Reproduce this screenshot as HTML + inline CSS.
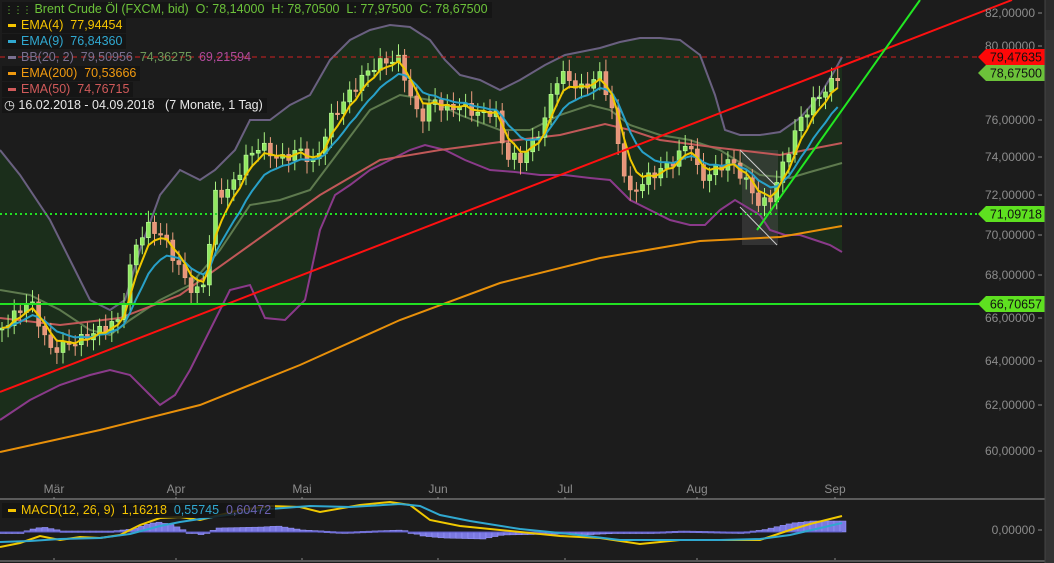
<!DOCTYPE html>
<html><head><meta charset="utf-8"><style>
html,body{margin:0;padding:0;background:#1c1c1c;width:1054px;height:563px;overflow:hidden;font-family:"Liberation Sans",sans-serif}
#c{position:absolute;left:0;top:0}
.lg{position:absolute;left:2px;font-size:12.5px;line-height:15px;background:rgba(20,20,20,.85);padding:0 4px 0 2px;white-space:nowrap}
</style></head><body>
<svg id="c" width="1054" height="563" xmlns="http://www.w3.org/2000/svg"></svg>
<div class="lg" style="top:2px;color:#6cc23a"><span style="font-size:10px;letter-spacing:-1px">&#8942;&#8942;&#8942;</span> Brent Crude Öl (FXCM, bid)&nbsp; O: 78,14000&nbsp; H: 78,70500&nbsp; L: 77,97500&nbsp; C: 78,67500</div>
<div class="lg" style="top:18px;color:#f5c400"><span style="display:inline-block;width:8px;height:3px;background:#f5c400;vertical-align:middle;margin:0 5px 0 4px"></span>EMA(4)&nbsp; 77,94454</div>
<div class="lg" style="top:34px;color:#30a8d0"><span style="display:inline-block;width:8px;height:3px;background:#30a8d0;vertical-align:middle;margin:0 5px 0 4px"></span>EMA(9)&nbsp; 76,84360</div>
<div class="lg" style="top:50px;color:#7a7090;background:none"><span style="display:inline-block;width:8px;height:3px;background:#7a7090;vertical-align:middle;margin:0 5px 0 4px"></span>BB(20, 2)&nbsp; 79,50956&nbsp; <span style="color:#6f9a5a">74,36275</span>&nbsp; <span style="color:#b04a9a">69,21594</span></div>
<div class="lg" style="top:66px;color:#f09a10"><span style="display:inline-block;width:8px;height:3px;background:#f09a10;vertical-align:middle;margin:0 5px 0 4px"></span>EMA(200)&nbsp; 70,53666</div>
<div class="lg" style="top:82px;color:#d05a5a"><span style="display:inline-block;width:8px;height:3px;background:#d05a5a;vertical-align:middle;margin:0 5px 0 4px"></span>EMA(50)&nbsp; 74,76715</div>
<div class="lg" style="top:98px;color:#e8e8e8">&#9719; 16.02.2018 - 04.09.2018&nbsp;&nbsp; (7 Monate, 1 Tag)</div>
<div class="lg" style="top:503px;color:#f5c400"><span style="display:inline-block;width:8px;height:3px;background:#f5c400;vertical-align:middle;margin:0 5px 0 4px"></span>MACD(12, 26, 9)&nbsp; 1,16218&nbsp; <span style="color:#30a8d0">0,55745</span>&nbsp; <span style="color:#6a60b0">0,60472</span></div>
<script>
const S=document.getElementById('c');let h='';
function pts(a){return a.map(p=>p[0]+','+p[1]).join(' ')}
function interp(a,x){for(let i=1;i<a.length;i++){if(x<=a[i][0]){const t=(x-a[i-1][0])/(a[i][0]-a[i-1][0]);return a[i-1][1]+t*(a[i][1]-a[i-1][1]);}}return a[a.length-1][1]}
function pl(a,c,w,extra){h+=`<polyline points="${pts(a)}" fill="none" stroke="${c}" stroke-width="${w}" ${extra||''}/>`}
h+='<rect x="1045" y="0" width="9" height="563" fill="#2b2b2b"/><rect x="1045" y="30" width="9" height="535" fill="#333"/>';
const up=[[0,150],[20,175],[50,220],[70,260],[90,300],[110,310],[125,300],[140,250],[160,195],[180,170],[200,180],[215,170],[235,150],[250,120],[270,120],[290,105],[310,95],[330,60],[350,40],[370,30],[390,25],[410,27],[430,40],[445,60],[460,75],[480,80],[500,90],[520,80],[545,65],[565,55],[590,50],[600,48],[620,42],[640,38],[660,38],[680,40],[700,55],[715,95],[725,130],[740,135],[760,135],[780,132],[800,118],[820,95],[835,70],[842,57]];
const lo=[[0,420],[30,400],[60,385],[90,375],[110,370],[130,375],[150,395],[160,405],[175,395],[190,370],[210,330],[230,290],[250,285],[265,318],[285,320],[305,300],[320,230],[335,195],[350,185],[370,170],[390,160],[410,150],[425,145],[445,150],[465,160],[490,170],[515,172],[540,175],[565,175],[590,178],[610,180],[630,200],[650,210],[670,220],[690,225],[705,225],[720,210],[735,200],[760,215],[770,230],[785,235],[800,235],[815,240],[830,245],[842,252]];
h+=`<polygon points="${pts(up.concat(lo.slice().reverse()))}" fill="#1b2e1b"/>`;
h+='<rect x="742" y="150" width="36" height="95" fill="#4a4a4a" opacity=".5"/>';
const mid=[[0,290],[30,295],[60,310],[90,330],[110,335],[130,320],[160,300],[190,285],[220,250],[250,205],[280,200],[310,190],[340,150],[370,110],[400,95],[430,100],[460,115],[500,130],[530,130],[560,115],[590,105],[610,110],[630,125],[660,135],[690,140],[720,150],[760,175],[790,178],[810,172],[842,163]];
pl(mid,'#5e7a4e',2);
pl(up,'#6a6080',2);pl(lo,'#8a3a8a',2);
pl([[0,452],[100,430],[200,405],[300,365],[400,320],[500,283],[600,258],[700,241],[780,237],[842,226]],'#e8900a',2);
pl([[0,318],[60,325],[120,318],[180,295],[250,245],[320,195],[380,160],[440,150],[500,142],[560,135],[605,124],[630,130],[660,140],[720,148],[780,155],[842,143]],'#c05858',2);
const P=[[0,330],[30,300],[50,350],[80,340],[100,330],[120,320],[135,245],[150,225],[165,240],[180,270],[195,295],[205,280],[215,195],[230,190],[245,160],[260,145],[280,160],[300,150],[315,165],[330,120],[345,100],[360,80],[375,65],[390,60],[400,60],[410,95],[420,120],[435,100],[445,110],[460,105],[480,115],[495,110],[505,155],[520,160],[535,140],[545,120],[555,80],[565,75],[580,90],[600,75],[610,100],[620,155],[630,195],[645,180],[660,170],[675,160],[690,140],[700,180],[715,170],[730,160],[745,180],[760,205],[770,200],[785,160],[800,120],[815,100],[830,85],[842,72]];
let closes=[],xs=[];let prev=interp(P,0);
for(let x=2,i=0;x<=842;x+=6.1,i++){const c=interp(P,x)+Math.sin(i*2.3)*5;xs.push(x);closes.push([prev,c]);prev=c;}
closes.forEach((oc,i)=>{const x=xs[i],o=oc[0],c=oc[1],t=Math.min(o,c),b=Math.max(o,c);const upc=c<o;const col=upc?'#a8f080':'#f0a080';
h+=`<line x1="${x}" y1="${t-6-Math.abs(Math.sin(i))*6}" x2="${x}" y2="${b+6+Math.abs(Math.cos(i))*6}" stroke="${col}" stroke-width="1"/>`;
h+=`<rect x="${x-2}" y="${t}" width="4" height="${Math.max(b-t,1.5)}" fill="${upc?'#90e860':'#e8957a'}" stroke="${upc?'#c0ffa0':'#f0a888'}" stroke-width=".6"/>`;});
function ema(n){const k=2/(n+1);let e=closes[0][1];return closes.map((oc,i)=>{e=oc[1]*k+e*(1-k);return [xs[i],e.toFixed(1)]})}
pl(ema(9),'#28a0c8',2);pl(ema(4),'#f0c800',2);
h+='<line x1="0" y1="392" x2="1012" y2="0" stroke="#ff1010" stroke-width="2"/>';
h+='<line x1="757" y1="230" x2="920" y2="0" stroke="#22e822" stroke-width="2"/>';
h+='<line x1="740" y1="150" x2="775" y2="185" stroke="#ccc" stroke-width="1"/><line x1="740" y1="207" x2="777" y2="245" stroke="#ccc" stroke-width="1"/>';
h+='<line x1="0" y1="57" x2="980" y2="57" stroke="#d02020" stroke-width="1" stroke-dasharray="5,4"/>';
h+='<line x1="0" y1="214" x2="985" y2="214" stroke="#22e022" stroke-width="2" stroke-dasharray="2,3"/>';
h+='<line x1="0" y1="304" x2="985" y2="304" stroke="#22e022" stroke-width="2"/>';
const ax=[[82,13],[80,46],[76,120],[74,157],[72,195],[70,235],[68,275],[66,318],[64,361],[62,405],[60,451]];
ax.forEach(a=>{h+=`<text x="1035" y="${a[1]+4}" fill="#8c8c8c" font-size="12" text-anchor="end" font-family="Liberation Sans">${a[0]},00000</text><line x1="1038" y1="${a[1]}" x2="1042" y2="${a[1]}" stroke="#8c8c8c"/>`});
h+=`<text x="1035" y="534" fill="#8c8c8c" font-size="12" text-anchor="end">0,00000</text><line x1="1038" y1="530" x2="1042" y2="530" stroke="#8c8c8c"/>`;
function tag(y,txt,bg){h+=`<polygon points="978,${y} 986,${y-8} 1045,${y-8} 1045,${y+8} 986,${y+8}" fill="${bg}"/><text x="1042" y="${y+4.5}" font-size="12.5" text-anchor="end" fill="#111">${txt}</text>`}
tag(57,'79,47635','#ff0808');tag(73,'78,67500','#6cc23a');tag(214,'71,09718','#5ee020');tag(304,'66,70657','#5ee020');
[['Mär',54],['Apr',176],['Mai',302],['Jun',438],['Jul',565],['Aug',697],['Sep',835]].forEach(m=>{h+=`<text x="${m[1]}" y="493" fill="#8c8c8c" font-size="12" text-anchor="middle">${m[0]}</text><line x1="${m[1]}" y1="497" x2="${m[1]}" y2="499" stroke="#888"/><line x1="${m[1]}" y1="558" x2="${m[1]}" y2="561" stroke="#888"/>`});
h+='<line x1="0" y1="499" x2="1045" y2="499" stroke="#9a9a9a" stroke-width="1"/><line x1="0" y1="561" x2="1045" y2="561" stroke="#555" stroke-width="2"/><line x1="1045" y1="0" x2="1045" y2="563" stroke="#444"/>';
const hist=[[0,-1],[20,0],[30,3],[40,5],[60,1],[110,1],[130,3],[145,8],[155,10],[170,7],[185,0],[200,-3],[215,4],[260,5],[275,6],[300,2],[340,0],[400,2],[420,-4],[440,-6],[480,-7],[500,-3],[560,-2],[580,-3],[620,-1],[680,1],[740,0],[760,2],[790,9],[810,11],[842,11]];
for(let x=0;x<842;x+=6){const v=interp(hist,x);h+=`<rect x="${x}" y="${v>0?532-v:532}" width="6" height="${Math.max(Math.abs(v),1.5)}" fill="#7a78e0" stroke="#9a98ff" stroke-width=".5"/>`}
h+='<line x1="0" y1="532" x2="842" y2="532" stroke="#5a58c0"/>';
pl([[0,547],[20,543],[40,536],[60,540],[80,537],[100,538],[120,535],[140,525],[160,518],[180,517],[200,520],[240,510],[270,506],[300,507],[320,512],[360,505],[390,502],[410,505],[430,520],[460,526],[500,530],[560,536],[600,538],[640,544],[680,540],[720,540],[760,540],[790,530],[810,524],[842,516]],'#f0c800',2);
pl([[0,542],[30,541],[60,539],[100,538],[130,534],[160,526],[180,522],[220,516],[270,509],[310,506],[350,507],[400,504],[420,506],[440,515],[470,521],[520,529],[570,534],[620,540],[660,540],[720,540],[760,539],[790,535],[842,523]],'#30a8d0',2);
S.innerHTML=h;
</script>
</body></html>
